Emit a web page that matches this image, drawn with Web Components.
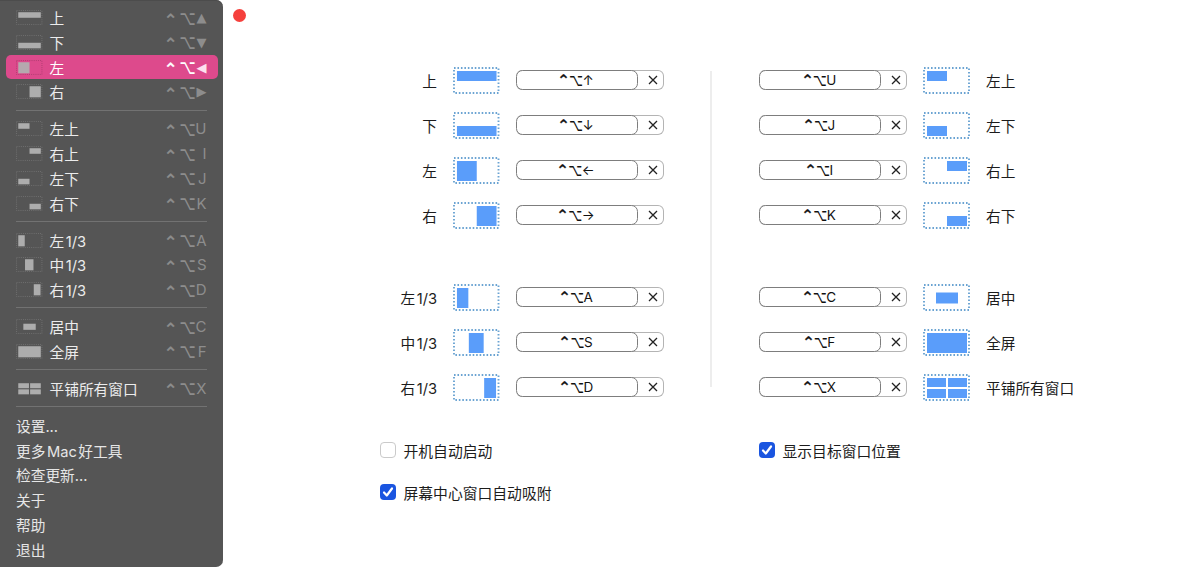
<!DOCTYPE html>
<html lang="zh"><head><meta charset="utf-8"><title>窗口管理</title>
<style>
html,body{margin:0;padding:0;background:#fff;height:100%;overflow:hidden}
body{font-family:"Inter","Noto Sans CJK SC",sans-serif;font-size:14.7px;-webkit-font-smoothing:antialiased}
</style></head><body>
<app-root></app-root>
<script>
const FILLS={
 '上':[[4,4,40,10]],'下':[[4,14,40,10]],'左':[[4,4,20,20]],'右':[[24,4,20,20]],
 '左上':[[4,4,20,10]],'右上':[[24,4,20,10]],'左下':[[4,14,20,10]],'右下':[[24,14,20,10]],
 '左1/3':[[4,4,11.5,20]],'中1/3':[[16,4,15,20]],'右1/3':[[31.5,4,12,20]],
 '居中':[[13,8.5,22,11]],'全屏':[[4,4,40,20]],
 '平铺':[[4,4,19,9],[25,4,19,9],[4,15,19,9],[25,15,19,9]]
};
function def(name,cls){customElements.define(name,cls)}
function shadow(el,html){el.attachShadow({mode:'open'}).innerHTML=html}

def('win-icon',class extends HTMLElement{connectedCallback(){
 const k=this.getAttribute('kind');
 const rects=FILLS[k].map(r=>`<rect x="${r[0]}" y="${r[1]}" width="${r[2]}" height="${r[3]}"/>`).join('');
 shadow(this,`<style>:host{display:block;width:var(--w,47px);height:var(--h,27px)}
 svg{display:block;width:100%;height:100%}
 .d{fill:none;stroke:var(--dot,#6aa3d2);stroke-width:var(--dw,1.9);stroke-dasharray:var(--dash,1.6 1.9)}
 .f{fill:var(--fill,#5a9dfa)}</style>
 <svg viewBox="0 0 47 27" preserveAspectRatio="none"><rect class="d" x="1" y="1" width="45" height="25"/><g class="f">${rects}</g></svg>`);
}});

def('menu-item',class extends HTMLElement{connectedCallback(){
 const icon=this.getAttribute('icon'),key=this.getAttribute('key');
 shadow(this,`<style>
 :host{display:flex;align-items:center;height:24.75px;margin:0 5.5px;padding:0 11px 0 10.5px;border-radius:5px;color:#ececec;font-size:14.7px;word-spacing:-2.6px;white-space:nowrap;
  --w:26.5px;--h:15px;--dot:#757575;--fill:#adadad;--dw:1.6;--dash:1.6 2.2}
 :host([active]){background:#dd4a8c;color:#fff;--dot:#a83b6b;--fill:#b5a9ae}
 :host([icon="平铺"]){--dot:transparent}
 win-icon{margin-right:7px;flex:none}
 .t{flex:1}
 .k{display:flex;align-items:center;width:42px;color:#8d8d8d;font:14.5px "DejaVu Sans",sans-serif}
 :host([active]) .k{color:#fff}
 .c{width:15px;font-size:17px;line-height:14px;-webkit-text-stroke:.4px currentColor;transform:translate(-1px,2px)}
 .o{width:13px;font-size:14px;line-height:14px;display:inline-block;transform:scaleY(1.45)}
 .l{flex:1;text-align:right;font:15px "Inter",sans-serif}
 .s{flex:1;text-align:right;font:13px "DejaVu Sans",sans-serif;line-height:1}
 :host([active]) .s{color:#fde0ee}
 </style>${icon?`<win-icon kind="${icon}"></win-icon>`:''}<span class="t"><slot></slot></span>
 ${key?`<span class="k"><span class="c">⌃</span><span class="o">⌥</span><span class="${/^[A-Z]$/.test(key)?'l':'s'}">${key}</span></span>`:''}`);
}});

def('menu-sep',class extends HTMLElement{connectedCallback(){
 shadow(this,`<style>:host{display:block;height:1px;background:#727272;margin:5.5px 16px 5.75px}</style>`);
}});

def('app-menu',class extends HTMLElement{connectedCallback(){
 shadow(this,`<style>:host{display:block;width:223px;height:567px;box-sizing:border-box;padding-top:5.2px;background:#555;border-radius:0 7px 7px 0;flex:none;box-shadow:inset 0 1px 0 #4c4c4c}
 menu-item[plain]{padding-left:10.5px;color:#e6e6e6}</style>
 <menu-item icon="上" key="▲">上</menu-item><menu-item icon="下" key="▼">下</menu-item>
 <menu-item icon="左" key="◀" active>左</menu-item><menu-item icon="右" key="▶">右</menu-item><menu-sep></menu-sep>
 <menu-item icon="左上" key="U">左上</menu-item><menu-item icon="右上" key="I">右上</menu-item>
 <menu-item icon="左下" key="J">左下</menu-item><menu-item icon="右下" key="K">右下</menu-item><menu-sep></menu-sep>
 <menu-item icon="左1/3" key="A">左 1/3</menu-item><menu-item icon="中1/3" key="S">中 1/3</menu-item><menu-item icon="右1/3" key="D">右 1/3</menu-item><menu-sep></menu-sep>
 <menu-item icon="居中" key="C">居中</menu-item><menu-item icon="全屏" key="F">全屏</menu-item><menu-sep></menu-sep>
 <menu-item icon="平铺" key="X">平铺所有窗口</menu-item><menu-sep></menu-sep>
 <menu-item plain>设置...</menu-item><menu-item plain>更多 Mac 好工具</menu-item><menu-item plain>检查更新...</menu-item>
 <menu-item plain>关于</menu-item><menu-item plain>帮助</menu-item><menu-item plain>退出</menu-item>`);
}});

def('shortcut-field',class extends HTMLElement{connectedCallback(){
 const key=this.getAttribute('key');
 shadow(this,`<style>:host{display:flex;width:148px;height:20px;box-sizing:border-box;border:1.2px solid #b4b4b4;border-left:none;border-radius:6px;flex:none;color:#111}
 .i{width:122px;height:20px;margin-top:-1.2px;flex:none;box-sizing:border-box;border:1.4px solid #7d7d7d;border-radius:6.5px;background:#fff;display:flex;align-items:center;justify-content:center;padding-right:2px;font:13px "DejaVu Sans",sans-serif;line-height:1}
 .c{font-size:13px;line-height:14px;width:11px;text-align:center;-webkit-text-stroke:.3px currentColor;transform:translateY(1.5px) scale(1.2)}
 .o{font-size:12px;line-height:14px;width:11px;margin-right:2.5px;text-align:center;display:inline-block;transform:scaleY(1.45)}
 .x{flex:1;display:flex;align-items:center;justify-content:center;padding:0 0 0 4px}
 svg{width:10px;height:10px;stroke:#222;stroke-width:1.3;fill:none}
 .k{font:13.5px "Inter",sans-serif;color:#111}</style>
 <span class="i"><span class="c">⌃</span><span class="o">⌥</span><span class="k">${key}</span></span>
 <span class="x"><svg viewBox="0 0 10 10"><path d="M1 1l8 8M9 1l-8 8"/></svg></span>`);
}});

def('shortcut-row',class extends HTMLElement{connectedCallback(){
 const a=n=>this.getAttribute(n),side=a('side');
 const field=`<shortcut-field key="${a('key')}"></shortcut-field>`,icon=`<win-icon kind="${a('icon')}"></win-icon>`;
 shadow(this,`<style>:host{display:flex;align-items:center;height:45px;color:#1c1c1c;font-size:14.7px;word-spacing:-2.6px;white-space:nowrap}
 .l{flex:none}
 :host([side=left]) .l{width:57px;text-align:right}
 :host([side=left]) win-icon{margin:0 16.5px 0 16px}
 :host([side=right]) win-icon{margin:0 16px 0 16px}
 </style>${side=='left'?`<span class="l"><slot></slot></span>${icon}${field}`:`${field}${icon}<span class="l"><slot></slot></span>`}`);
}});

def('check-row',class extends HTMLElement{connectedCallback(){
 const on=this.hasAttribute('checked');
 shadow(this,`<style>:host{display:flex;align-items:center;height:42px;color:#1c1c1c;font-size:14.8px;white-space:nowrap}
 .b{width:16px;height:16px;box-sizing:border-box;border-radius:4px;margin:0 7.5px 0 0;flex:none;display:flex;align-items:center;justify-content:center}
 .off{border:1.4px solid #cacaca;background:#fff}.on{background:#1a55e0}
 svg{width:12px;height:12px;fill:none;stroke:#fff;stroke-width:2.2;stroke-linecap:round;stroke-linejoin:round}</style>
 <span class="b ${on?'on':'off'}">${on?'<svg viewBox="0 0 12 12"><path d="M2 6.5l2.8 3L10 2.5"/></svg>':''}</span><slot></slot>`);
}});

def('settings-panel',class extends HTMLElement{connectedCallback(){
 shadow(this,`<style>:host{display:grid;grid-template-columns:284px 95px auto;margin:35.5px 0 0 157px}
 .sp{height:37px}
 .div{width:1px;background:#dcdcdc;justify-self:center;margin:13.5px 0 22.5px;transform:translateX(-.5px)}
 .checks{margin-top:19.5px}</style>
 <div>
 <shortcut-row side="left" key="↑" icon="上">上</shortcut-row>
 <shortcut-row side="left" key="↓" icon="下">下</shortcut-row>
 <shortcut-row side="left" key="←" icon="左">左</shortcut-row>
 <shortcut-row side="left" key="→" icon="右">右</shortcut-row>
 <div class="sp"></div>
 <shortcut-row side="left" key="A" icon="左1/3">左 1/3</shortcut-row>
 <shortcut-row side="left" key="S" icon="中1/3">中 1/3</shortcut-row>
 <shortcut-row side="left" key="D" icon="右1/3">右 1/3</shortcut-row>
 </div>
 <div class="div"></div>
 <div>
 <shortcut-row side="right" key="U" icon="左上">左上</shortcut-row>
 <shortcut-row side="right" key="J" icon="左下">左下</shortcut-row>
 <shortcut-row side="right" key="I" icon="右上">右上</shortcut-row>
 <shortcut-row side="right" key="K" icon="右下">右下</shortcut-row>
 <div class="sp"></div>
 <shortcut-row side="right" key="C" icon="居中">居中</shortcut-row>
 <shortcut-row side="right" key="F" icon="全屏">全屏</shortcut-row>
 <shortcut-row side="right" key="X" icon="平铺">平铺所有窗口</shortcut-row>
 </div>
 <div class="checks"><check-row>开机自动启动</check-row><check-row checked>屏幕中心窗口自动吸附</check-row></div>
 <div></div>
 <div class="checks"><check-row checked>显示目标窗口位置</check-row></div>`);
}});

def('app-root',class extends HTMLElement{connectedCallback(){
 shadow(this,`<style>:host{display:flex;width:1200px;height:567px;overflow:hidden}
 main{flex:1;min-width:0}
 .dot{display:block;width:13.5px;height:13.5px;border-radius:50%;background:#f5403c;margin:8.5px 0 0 9.5px}</style>
 <app-menu></app-menu><main><span class="dot"></span><settings-panel></settings-panel></main>`);
}});
</script>
</body></html>
